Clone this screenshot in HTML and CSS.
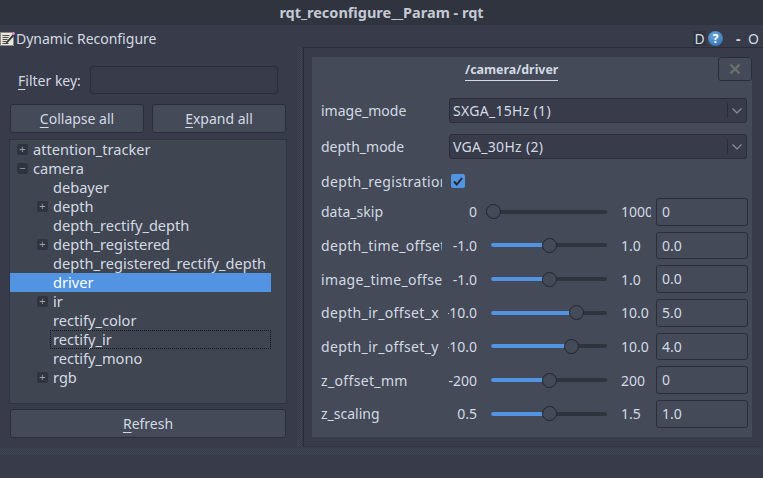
FILE: index.html
```html
<!DOCTYPE html>
<html lang="en">
  <head>
    <title>rqt_reconfigure__Param - rqt</title>
    <meta charset="utf-8" />
    <link rel="stylesheet" href="styles.css">
  </head>
  <body>
    <div class="titlebar">rqt_reconfigure__Param - rqt</div>

    <div class="dock-title">
      <svg class="dock-icon" width="15" height="15" viewBox="0 0 15 15">
        <rect x="0.5" y="1.5" width="13" height="13" fill="#e8e6df" stroke="#8a8a80"/>
        <path d="M2.5 4.5h7M2.5 6.5h6M2.5 8.5h5M2.5 10.5h4M2.5 12.5h6" stroke="#4a4a4a"/>
        <path d="M6 11l7-8 1.5 1.5-7 7.5-2 .5z" fill="#3a3a3a"/>
        <circle cx="13.5" cy="2.5" r="1.5" fill="#d98ac8"/>
      </svg>
      <span class="dock-name">Dynamic Reconfigure</span>
      <span class="dock-d">D</span>
      <span class="dock-help">?</span>
      <span class="dock-min">-</span>
      <span class="dock-o">O</span>
    </div>

    <div class="main">
      <div class="left">
        <div class="filter">
          <label class="filter-label"><u>F</u>ilter key:</label>
          <div class="input filter-input"></div>
        </div>
        <div class="btn-row">
          <div class="btn"><span><u>C</u>ollapse all</span></div>
          <div class="btn"><span><u>E</u>xpand all</span></div>
        </div>
        <div class="tree">
          <div class="node"><i class="branch">+</i>attention_tracker</div>
          <div class="node"><i class="branch">&minus;</i>camera</div>
          <div class="node child">debayer</div>
          <div class="node child"><i class="branch">+</i>depth</div>
          <div class="node child">depth_rectify_depth</div>
          <div class="node child"><i class="branch">+</i>depth_registered</div>
          <div class="node child">depth_registered_rectify_depth</div>
          <div class="node child selected">driver</div>
          <div class="node child"><i class="branch">+</i>ir</div>
          <div class="node child">rectify_color</div>
          <div class="node child focused">rectify_ir</div>
          <div class="node child">rectify_mono</div>
          <div class="node child"><i class="branch">+</i>rgb</div>
        </div>
        <div class="btn refresh"><span><u>R</u>efresh</span></div>
      </div>

      <div class="vsplit"></div>

      <div class="frame">
        <div class="panel">
          <div class="panel-head">
            <span class="panel-title">/camera/driver</span>
            <div class="close">
              <svg width="12" height="12" viewBox="0 0 12 12"><path d="M1.5 1.5l9 9M10.5 1.5l-9 9" stroke="#6d7068" stroke-width="2.4"/></svg>
            </div>
          </div>

          <div class="row combo-row">
            <div class="name">image_mode</div>
            <div class="combo"><span class="combo-text">SXGA_15Hz (1)</span><span class="combo-arrow"><svg width="10" height="6" viewBox="0 0 10 6"><path d="M.5.5L5 5 9.5.5" fill="none" stroke="#8b909c" stroke-width="1.2"/></svg></span></div>
          </div>
          <div class="row combo-row">
            <div class="name">depth_mode</div>
            <div class="combo"><span class="combo-text">VGA_30Hz (2)</span><span class="combo-arrow"><svg width="10" height="6" viewBox="0 0 10 6"><path d="M.5.5L5 5 9.5.5" fill="none" stroke="#8b909c" stroke-width="1.2"/></svg></span></div>
          </div>
          <div class="row check-row">
            <div class="name wide">depth_registration</div>
            <div class="check"><svg width="10" height="9" viewBox="0 0 10 9"><path d="M1 4.5L3.8 7.5 9 1" fill="none" stroke="#262a33" stroke-width="2"/></svg></div>
          </div>

          <div class="row slider-row">
            <div class="name">data_skip</div>
            <div class="min">0</div>
            <div class="slider"><div class="fill" style="width:2px"></div><div class="knob"></div></div>
            <div class="max">1000</div>
            <div class="input value">0</div>
          </div>
          <div class="row slider-row">
            <div class="name wide">depth_time_offset</div>
            <div class="min">-1.0</div>
            <div class="slider"><div class="fill" style="width:58px"></div><div class="knob"></div></div>
            <div class="max">1.0</div>
            <div class="input value">0.0</div>
          </div>
          <div class="row slider-row">
            <div class="name wide">image_time_offset</div>
            <div class="min">-1.0</div>
            <div class="slider"><div class="fill" style="width:58px"></div><div class="knob"></div></div>
            <div class="max">1.0</div>
            <div class="input value">0.0</div>
          </div>
          <div class="row slider-row">
            <div class="name wide">depth_ir_offset_x</div>
            <div class="min">-10.0</div>
            <div class="slider"><div class="fill" style="width:85px"></div><div class="knob"></div></div>
            <div class="max">10.0</div>
            <div class="input value">5.0</div>
          </div>
          <div class="row slider-row">
            <div class="name wide">depth_ir_offset_y</div>
            <div class="min">-10.0</div>
            <div class="slider"><div class="fill" style="width:80px"></div><div class="knob"></div></div>
            <div class="max">10.0</div>
            <div class="input value">4.0</div>
          </div>
          <div class="row slider-row">
            <div class="name wide">z_offset_mm</div>
            <div class="min">-200</div>
            <div class="slider"><div class="fill" style="width:58px"></div><div class="knob"></div></div>
            <div class="max">200</div>
            <div class="input value">0</div>
          </div>
          <div class="row slider-row">
            <div class="name">z_scaling</div>
            <div class="min">0.5</div>
            <div class="slider"><div class="fill" style="width:58px"></div><div class="knob"></div></div>
            <div class="max">1.5</div>
            <div class="input value">1.0</div>
          </div>
        </div>
      </div>
    </div>

    <div class="hsplit"></div>
  </body>
</html>
```

FILE: styles.css
```css
html {
  height: 100%;
}
body {
  margin: 0;
  width: 763px;
  height: 478px;
  overflow: hidden;
  background: #383c4a;
  color: #d3dae3;
  font-family: "Noto Sans", sans-serif;
  font-size: 14px;
  display: flex;
  flex-direction: column;
}

u {
  text-underline-offset: 3px;
}

.titlebar {
  height: 25px;
  line-height: 25px;
  flex: none;
  background: #2f343f;
  color: #c4c9d3;
  font-weight: bold;
  font-size: 14.5px;
  text-align: center;
}

/* dock title */
.dock-title {
  height: 22px;
  flex: none;
  display: flex;
  align-items: center;
}
.dock-icon {
  flex: none;
  margin-top: 5px;
}
.dock-name {
  margin: 5px 0 0 1px;
  flex: 1;
}
.dock-d {
  width: 13px;
  height: 15px;
  line-height: 15px;
  margin: 5px 2px 0 0;
  text-align: center;
  background: #2f343f;
}
.dock-help {
  width: 15px;
  height: 15px;
  line-height: 15px;
  margin-top: 5px;
  border-radius: 50%;
  background: radial-gradient(circle at 40% 30%, #6aa6dc, #2a68a8);
  color: #fff;
  font-weight: bold;
  font-size: 12px;
  text-align: center;
}
.dock-min {
  margin: 5px 0 0 13px;
  width: 6px;
  font-weight: bold;
}
.dock-o {
  margin: 5px 0 0 6px;
  width: 15px;
}

.main {
  height: 400px;
  flex: none;
  display: flex;
}

/* left column */
.left {
  width: 296px;
  flex: none;
  box-sizing: border-box;
  padding: 19px 10px 0 10px;
  display: flex;
  flex-direction: column;
}
.filter {
  height: 28px;
  display: flex;
  align-items: center;
  margin-right: 8px;
}
.filter-label {
  width: 80px;
  padding-left: 8px;
  box-sizing: border-box;
  flex: none;
}
.input {
  box-sizing: border-box;
  background: #383c4a;
  border: 1px solid #2b2e39;
  border-radius: 3px;
}
.filter-input {
  flex: 1;
  height: 28px;
}
.btn-row {
  display: flex;
  gap: 8px;
  margin-top: 10px;
}
.btn {
  flex: 1;
  height: 29px;
  box-sizing: border-box;
  background: #444a58;
  border: 1px solid #2b2e39;
  border-radius: 3px;
  display: flex;
  align-items: center;
  justify-content: center;
}
.tree {
  height: 265px;
  box-sizing: border-box;
  margin: 6px -1px 0 -1px;
  background: #404552;
  border: 1px solid #2f3342;
  font-size: 14.6px;
}
.node {
  height: 19px;
  line-height: 19px;
  padding-left: 23px;
  margin-right: 15px;
  display: flex;
  align-items: center;
  box-sizing: border-box;
}
.node.child {
  padding-left: 43px;
}
.branch {
  width: 11px;
  height: 11px;
  line-height: 10px;
  margin-left: -16px;
  margin-right: 5px;
  background: #2f343f;
  border-radius: 2px;
  color: #9ea3ad;
  font-style: normal;
  font-size: 11px;
  text-align: center;
  flex: none;
}
.selected {
  background: #5294e2;
  color: #fff;
}
.node.focused {
  margin-left: 40px;
  padding-left: 3px;
  outline: 1px dotted #15171c;
  outline-offset: -1px;
}
.refresh {
  flex: none;
  margin-top: 5px;
}

/* handles */
.vsplit {
  width: 5px;
  margin-left: 1px;
  flex: none;
  background: repeating-conic-gradient(#3f4453 0 25%, #383c4a 0 50%) 0 0 / 2px 2px;
}
.hsplit {
  height: 7px;
  margin-top: 1px;
  flex: none;
  background: repeating-conic-gradient(#3f4453 0 25%, #383c4a 0 50%) 0 0 / 2px 2px;
}

/* right column */
.frame {
  flex: 1;
  box-sizing: border-box;
  margin-left: 1px;
  border-left: 1px solid #2b2e39;
  border-top: 1px solid #2b2e39;
  border-bottom: 1px solid #2f3342;
  padding: 9px 11px 9px 8px;
  background: #383c4a;
}
.panel {
  height: 380px;
  box-sizing: border-box;
  background: #444a58;
  padding: 0 4px 0 9px;
}
.panel-head {
  height: 24px;
  margin: 0 -4px 17px 0;
  display: flex;
  align-items: flex-start;
}
.panel-title {
  margin: 4px 0 0 144px;
  height: 19px;
  line-height: 18px;
  font-size: 12.4px;
  font-weight: bold;
  border-bottom: 1px solid #d3dae3;
}
.close {
  margin-left: auto;
  width: 34px;
  height: 24px;
  box-sizing: border-box;
  border: 1px solid #2b2e39;
  border-radius: 3px;
  display: flex;
  align-items: center;
  justify-content: center;
}
.row {
  display: flex;
  align-items: center;
}
.name {
  width: 121px;
  flex: none;
  overflow: hidden;
  white-space: nowrap;
}
.name.wide {
  letter-spacing: 0.35px;
}
.combo-row {
  height: 25px;
  margin-bottom: 11px;
}
.combo {
  margin-left: 7px;
  width: 298px;
  height: 25px;
  box-sizing: border-box;
  background: #383c4a;
  border: 1px solid #2b2e39;
  border-radius: 3px;
  display: flex;
  align-items: center;
  padding-left: 3px;
}
.combo-text {
  flex: 1;
  letter-spacing: 0.3px;
}
.combo-arrow {
  width: 18px;
  height: 15px;
  border-left: 1px solid #2b2e39;
  display: flex;
  align-items: center;
  justify-content: center;
}
.check-row {
  height: 22px;
  margin-bottom: 6px;
}
.check {
  margin-left: 9px;
  width: 14px;
  height: 14px;
  background: #5294e2;
  border-radius: 2px;
  display: flex;
  align-items: center;
  justify-content: center;
}
.slider-row {
  height: 27.67px;
  margin-bottom: 6px;
}
.min {
  width: 29px;
  margin-left: 6px;
  flex: none;
  overflow: hidden;
  white-space: nowrap;
  display: flex;
  justify-content: flex-end;
}
.slider {
  width: 116px;
  height: 4px;
  margin-left: 14px;
  flex: none;
  background: #2f343f;
  border-radius: 2px;
  display: flex;
  align-items: center;
}
.fill {
  height: 4px;
  background: #5294e2;
  border-radius: 2px 0 0 2px;
  flex: none;
}
.knob {
  width: 15px;
  height: 15px;
  margin-left: -7px;
  flex: none;
  box-sizing: border-box;
  background: #444a58;
  border: 1px solid #23262e;
  border-radius: 50%;
}
.max {
  width: 30px;
  margin-left: 14px;
  flex: none;
  overflow: hidden;
  white-space: nowrap;
}
.value {
  width: 92px;
  height: 27.67px;
  line-height: 26px;
  margin-left: 5px;
  padding-left: 5px;
  flex: none;
  background: #444a58;
}
```
